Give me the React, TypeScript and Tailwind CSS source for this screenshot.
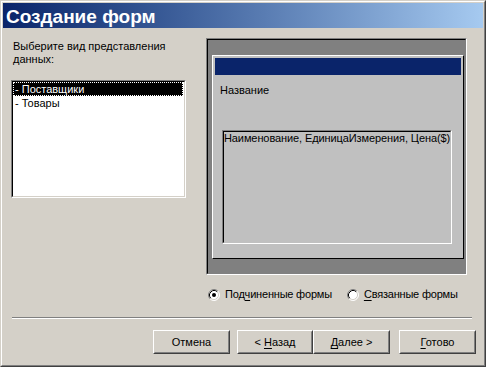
import React from "react";

function Radio({ checked }: { checked: boolean }) {
  return (
    <svg width="12" height="12" viewBox="0 0 12 12" className="shrink-0">
      <circle cx="6" cy="6" r="5" fill="#fff" />
      <path d="M2.11 9.89 A5.5 5.5 0 0 1 9.89 2.11" fill="none" stroke="#808080" strokeWidth="1" />
      <path d="M9.89 2.11 A5.5 5.5 0 0 1 2.11 9.89" fill="none" stroke="#fff" strokeWidth="1" />
      <path d="M2.82 9.18 A4.5 4.5 0 0 1 9.18 2.82" fill="none" stroke="#000" strokeWidth="1" />
      <path d="M9.18 2.82 A4.5 4.5 0 0 1 2.82 9.18" fill="none" stroke="#d4d0c8" strokeWidth="1" />
      {checked && <circle cx="6" cy="6" r="2" fill="#000" />}
    </svg>
  );
}

function Button({ w, children }: { w: string; children: React.ReactNode }) {
  return (
    <div className={`${w} h-[24px] border border-t-white border-l-white border-r-[#404040] border-b-[#404040]`}>
      <div className="h-full border border-t-[#d4d0c8] border-l-[#d4d0c8] border-r-[#808080] border-b-[#808080] flex items-center justify-center pt-[1px]">
        <span className="whitespace-pre">{children}</span>
      </div>
    </div>
  );
}

const U = ({ children }: { children: React.ReactNode }) => (
  <span className="underline underline-offset-[2px] decoration-1">{children}</span>
);

export default function App() {
  return (
    <div className="w-[486px] h-[367px] bg-[#d4d0c8] border border-t-[#d4d0c8] border-l-[#d4d0c8] border-r-[#404040] border-b-[#404040] font-['Liberation_Sans',Arial,sans-serif] text-[11px] leading-[13px] text-black">
      <div className="h-full border border-t-white border-l-white border-r-[#808080] border-b-[#808080] p-[1px] flex flex-col">
        {/* Title */}
        <div className="h-[25px] shrink-0 bg-linear-to-r from-[#0a246a] to-[#a6caf0] pl-[3px] pt-[3px]">
          <div className="text-white font-bold text-[19px] leading-[22px]">Создание форм</div>
        </div>

        {/* Body */}
        <div className="flex pt-[10px]">
          <div className="ml-[8px] w-[175px] flex flex-col">
            <div className="mt-[2px] pl-[2px]">
              Выберите вид представления
              <br />
              данных:
            </div>
            <div className="mt-[14px] h-[118px] border border-t-[#808080] border-l-[#808080] border-r-white border-b-white">
              <div className="h-full border border-t-black border-l-black border-r-[#d4d0c8] border-b-[#d4d0c8] bg-white">
                <div className="w-[170px] h-[14px] leading-[14px] bg-black text-white pl-[2px] outline-1 outline-dotted outline-white -outline-offset-1">
                  - Поставщики
                </div>
                <div className="w-[170px] h-[14px] leading-[14px] pl-[2px]">- Товары</div>
              </div>
            </div>
          </div>

          {/* Preview frame */}
          <div className="ml-[20px] w-[261px] h-[237px] border border-t-[#808080] border-l-[#808080] border-r-white border-b-white">
            <div className="h-full border border-t-black border-l-black border-r-[#808080] border-b-[#808080] bg-[#808080] pl-[4px] pt-[15px]">
              <div className="w-[252px] h-[204px] border border-t-white border-l-white border-r-black border-b-black bg-[#c0c0c0] p-[2px] flex flex-col">
                <div className="h-[17px] bg-[#0a246a] shrink-0" />
                <div className="mt-[9px] ml-[5px]">Название</div>
                <div className="mt-[33px] ml-[7px] w-[230px] h-[114px] border border-t-[#808080] border-l-[#808080] border-r-white border-b-white">
                  <div className="h-full border border-t-black border-l-black border-r-[#c0c0c0] border-b-[#c0c0c0] whitespace-nowrap tracking-[-0.1px]">
                    Наименование, ЕдиницаИзмерения, Цена($)
                  </div>
                </div>
              </div>
            </div>
          </div>
        </div>

        {/* Radios */}
        <div className="ml-[205px] mt-[13px] h-[13px] flex items-center tracking-[-0.2px]">
          <Radio checked />
          <span className="ml-[5px]">
            Под<U>ч</U>иненные формы
          </span>
          <span className="ml-[15px] flex items-center">
            <Radio checked={false} />
            <span className="ml-[5px]">
              <U>С</U>вязанные формы
            </span>
          </span>
        </div>

        {/* Separator */}
        <div className="ml-[9px] w-[460px] mt-[16px] h-[2px] border-t border-t-[#808080] border-b border-b-white" />

        {/* Buttons */}
        <div className="mt-[11px] ml-[150px] flex">
          <Button w="w-[77px]">Отмена</Button>
          <div className="ml-[7px]">
            <Button w="w-[76px]">
              {"< "}
              <U>Н</U>
              {"азад"}
            </Button>
          </div>
          <Button w="w-[77px]">
            <U>Д</U>
            {"алее >"}
          </Button>
          <div className="ml-[9px]">
            <Button w="w-[77px]">
              <U>Г</U>
              {"отово"}
            </Button>
          </div>
        </div>
      </div>
    </div>
  );
}
